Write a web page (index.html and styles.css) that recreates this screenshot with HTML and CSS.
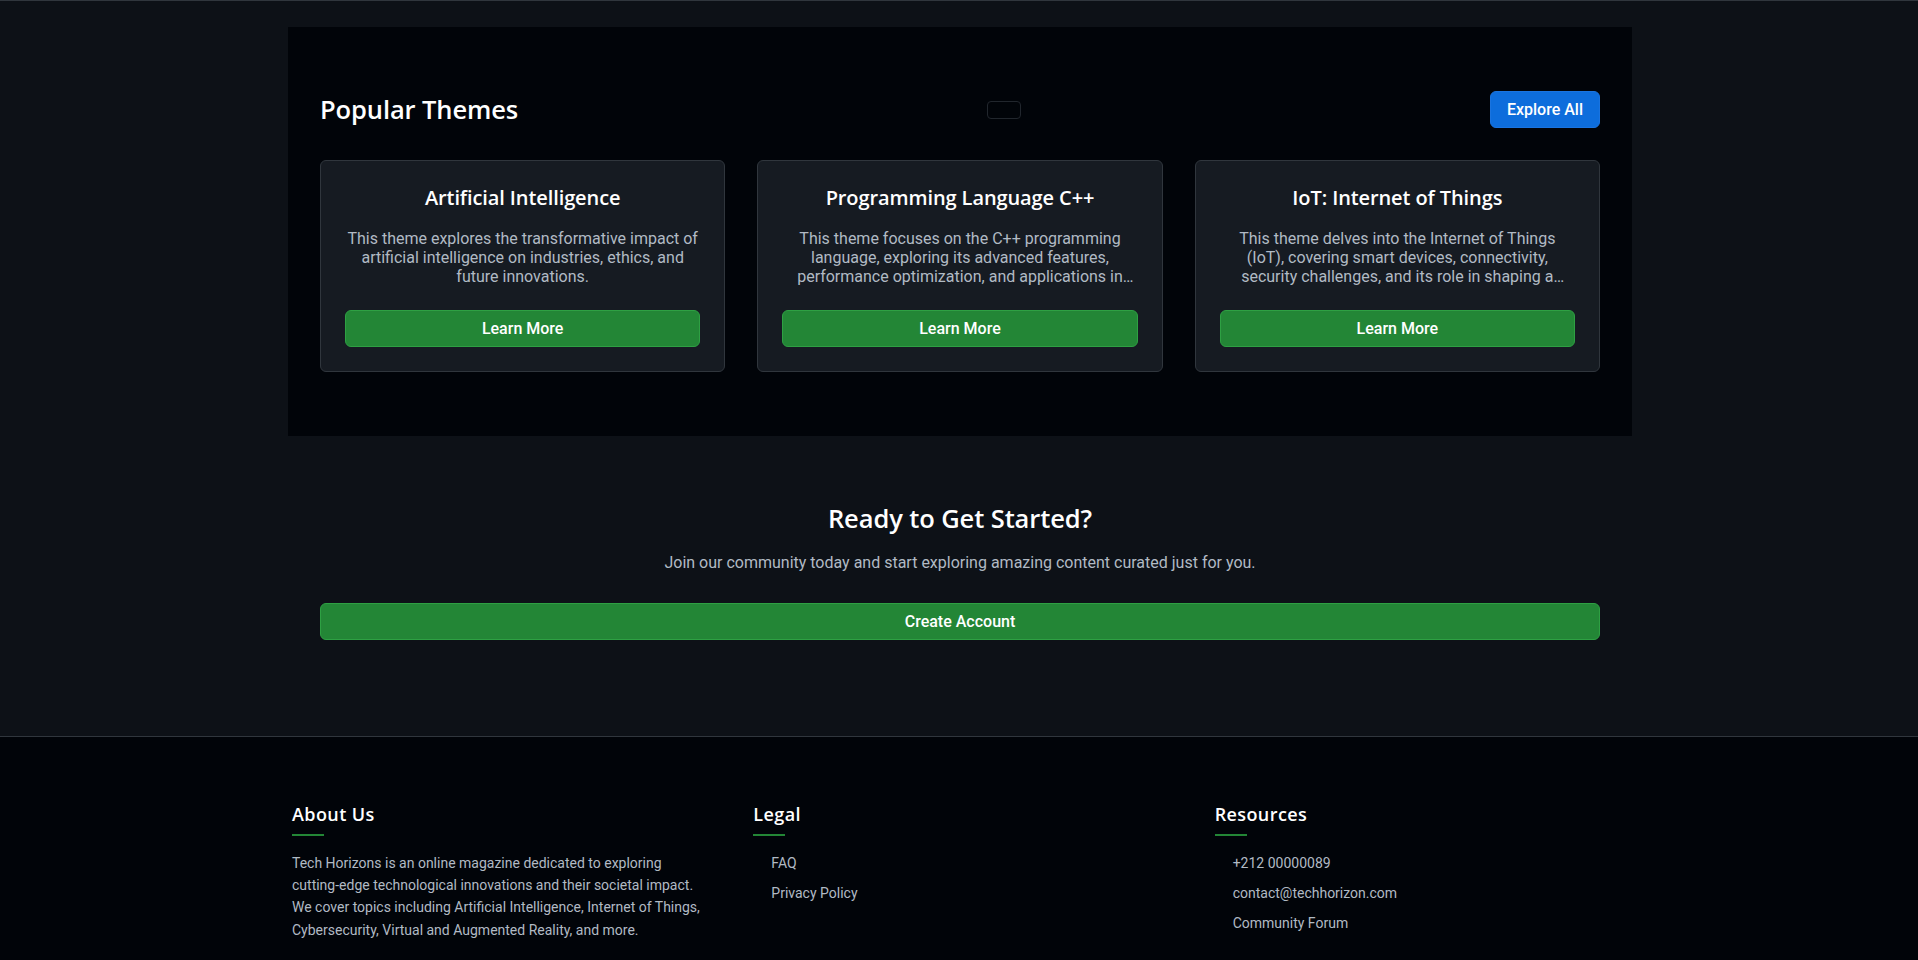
FILE: index.html
```html
<!DOCTYPE html>
<html lang="en">
<head>
<meta charset="utf-8">
<title>Tech Horizons</title>
<link rel="stylesheet" href="styles.css">
</head>
<body>
<div class="topline"></div>
<main>
  <section class="themes">
    <div class="themes-head">
      <h2 class="section-title">Popular Themes</h2>
      <span class="ghost"></span>
      <a class="btn btn-blue" href="#">Explore All</a>
    </div>
    <div class="cards">
      <article class="card">
        <h3 class="card-title">Artificial Intelligence</h3>
        <p class="card-desc">This theme explores the transformative impact of artificial intelligence on industries, ethics, and future innovations.</p>
        <a class="btn btn-green" href="#">Learn More</a>
      </article>
      <article class="card">
        <h3 class="card-title">Programming Language C++</h3>
        <p class="card-desc">This theme focuses on the C++ programming language, exploring its advanced features, performance optimization, and applications in modern software development.</p>
        <a class="btn btn-green" href="#">Learn More</a>
      </article>
      <article class="card">
        <h3 class="card-title">IoT: Internet of Things</h3>
        <p class="card-desc">This theme delves into the Internet of Things (IoT), covering smart devices, connectivity, security challenges, and its role in shaping a connected future.</p>
        <a class="btn btn-green" href="#">Learn More</a>
      </article>
    </div>
  </section>

  <section class="cta">
    <h2 class="cta-title">Ready to Get Started?</h2>
    <p class="cta-text">Join our community today and start exploring amazing content curated just for you.</p>
    <a class="btn btn-green btn-wide" href="#">Create Account</a>
  </section>
</main>

<footer class="footer">
  <div class="footer-grid">
    <div class="fcol">
      <h4 class="fhead">About Us</h4>
      <p class="ftext">Tech Horizons is an online magazine dedicated to exploring cutting-edge technological innovations and their societal impact. We cover topics including Artificial Intelligence, Internet of Things, Cybersecurity, Virtual and Augmented Reality, and more.</p>
    </div>
    <div class="fcol">
      <h4 class="fhead">Legal</h4>
      <ul class="flinks">
        <li><a href="#">FAQ</a></li>
        <li><a href="#">Privacy Policy</a></li>
      </ul>
    </div>
    <div class="fcol">
      <h4 class="fhead">Resources</h4>
      <ul class="flinks">
        <li><a href="#">+212 00000089</a></li>
        <li><a href="#">contact@techhorizon.com</a></li>
        <li><a href="#">Community Forum</a></li>
      </ul>
    </div>
  </div>
</footer>
</body>
</html>
```

FILE: styles.css
```css
* { box-sizing: border-box; }

html, body {
  margin: 0;
  padding: 0;
}

body {
  background: #0d1117;
  color: #c9d1d9;
  font-family: Roboto, "Liberation Sans", sans-serif;
  font-size: 16px;
}

.topline {
  height: 1px;
  background: #30363d;
}

main {
  padding: 26px 0 0 2px;
}

.themes {
  width: 1344px;
  margin: 0 auto;
  background: #010409;
  padding: 64px 32px;
}

.themes-head {
  display: flex;
  align-items: center;
  justify-content: space-between;
}

.section-title,
.card-title,
.cta-title,
.fhead {
  font-family: "Open Sans", "DejaVu Sans", sans-serif;
  font-weight: 600;
  color: #ffffff;
  margin: 0;
}

.section-title {
  font-size: 25.5px;
  line-height: 1.2;
  letter-spacing: -0.1px;
}

.ghost {
  display: block;
  width: 34px;
  height: 18px;
  border: 1px solid #21262d;
  border-radius: 4px;
}

.btn {
  display: block;
  text-decoration: none;
  color: #ffffff;
  font-family: Roboto, "Liberation Sans", sans-serif;
  font-weight: 500;
  font-size: 16px;
  line-height: 19px;
  padding: 8px 16px;
  border-radius: 6px;
  text-align: center;
  border: 1px solid transparent;
}

.btn-blue {
  background: #0d6ddc;
  border-color: #1a74e0;
}

.btn-green {
  background: #238636;
  border-color: #2ea043;
}

.cards {
  margin-top: 32px;
  display: grid;
  grid-template-columns: repeat(3, 1fr);
  gap: 32px;
}

.card {
  background: #161b22;
  border: 1px solid #30363d;
  border-radius: 6px;
  padding: 24px;
  text-align: center;
}

.card-title {
  font-size: 20px;
  line-height: 24px;
  letter-spacing: -0.1px;
  padding-top: 1px;
  margin-bottom: 19px;
}

.card-desc {
  margin: 0 0 23px;
  font-size: 16px;
  line-height: 19.2px;
  color: #b1bac4;
  display: -webkit-box;
  -webkit-line-clamp: 3;
  -webkit-box-orient: vertical;
  overflow: hidden;
}

.cta {
  width: 1344px;
  margin: 0 auto;
  padding: 64px 32px 96px;
  text-align: center;
}

.cta-title {
  font-size: 25.5px;
  line-height: 36px;
  letter-spacing: -0.1px;
}

.cta-text {
  margin: 15px 0 28px;
  font-size: 16px;
  line-height: 24px;
  color: #b1bac4;
}

.footer {
  background: #010409;
  border-top: 1px solid #30363d;
  padding: 64px 0 64px 2px;
}

.footer-grid {
  width: 1336px;
  margin: 0 auto;
  display: grid;
  grid-template-columns: repeat(3, 1fr);
  gap: 48px;
}

.fhead {
  font-size: 18px;
  line-height: 27px;
  letter-spacing: 0.4px;
  position: relative;
  padding-bottom: 8px;
  margin-bottom: 16px;
}

.fhead::after {
  content: "";
  position: absolute;
  left: 0;
  bottom: 0;
  width: 32px;
  height: 2px;
  background: #238636;
}

.ftext {
  margin: 0;
  font-size: 14px;
  line-height: 22.4px;
  color: #b1bac4;
}

.flinks {
  list-style: none;
  margin: 0;
  padding: 0 0 0 18px;
}

.flinks li {
  margin-bottom: 8px;
}

.flinks a {
  font-size: 14px;
  line-height: 22.4px;
  color: #b1bac4;
  text-decoration: none;
}
```
